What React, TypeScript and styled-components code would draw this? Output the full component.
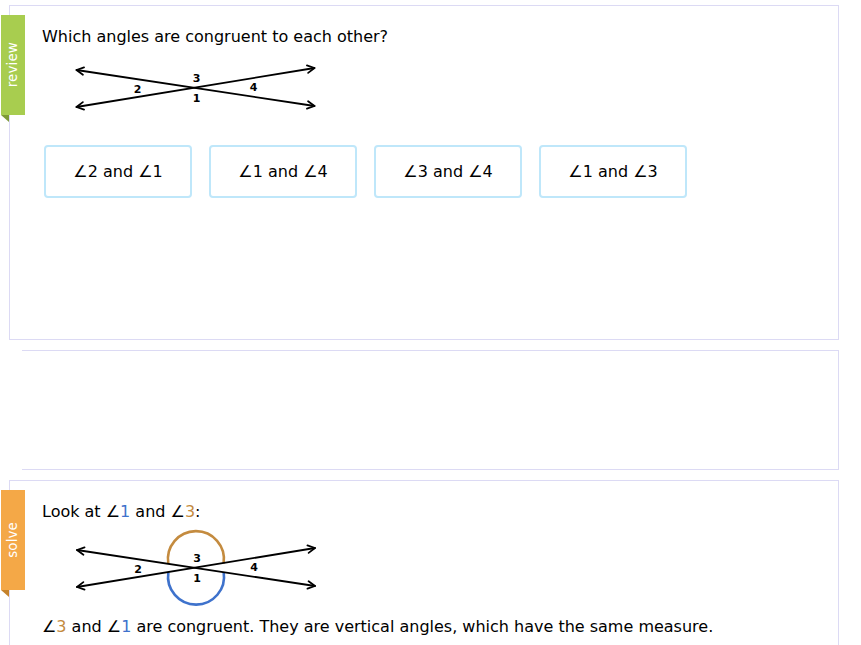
import React from "react";
import styled, { createGlobalStyle } from "styled-components";

const Global = createGlobalStyle`
  html, body { margin: 0; padding: 0; background: #fff; }
  body { font-family: "DejaVu Sans", Verdana, sans-serif; color: #000; overflow: hidden; }
`;

const Page = styled.div`
  display: flex;
  flex-direction: column;
  padding-top: 5px;
  width: 861px;
`;

const Panel = styled.section<{ $gapTop?: number }>`
  position: relative;
  box-sizing: border-box;
  margin-left: 9px;
  width: 830px;
  margin-top: ${(p) => p.$gapTop ?? 0}px;
  border: 1px solid #dcdaf4;
  padding: 21px 0 0 32px;
`;

const QuestionPanel = styled(Panel)`
  height: 335px;
`;

const EmptyPanel = styled.section`
  box-sizing: border-box;
  margin: 10px 0 0 22px;
  width: 817px;
  height: 120px;
  border: 1px solid #dcdaf4;
  border-left: none;
`;

const SolvePanel = styled(Panel)`
  height: 200px;
`;

const Tab = styled.div<{ $bg: string; $fold: string }>`
  position: absolute;
  left: -9px;
  top: 9px;
  width: 24px;
  height: 100px;
  background: ${(p) => p.$bg};
  display: flex;
  align-items: center;
  justify-content: center;
  &::after {
    content: "";
    position: absolute;
    left: 0;
    top: 100px;
    width: 0;
    height: 0;
    border-top: 7px solid ${(p) => p.$fold};
    border-left: 8px solid transparent;
  }
`;

const TabLabel = styled.span`
  writing-mode: vertical-rl;
  transform: rotate(180deg);
  color: #fff;
  font-size: 13.5px;
  line-height: 1;
  letter-spacing: 0.1px;
`;

const Text = styled.p`
  margin: 0;
  font-size: 16px;
  line-height: 20px;
`;

const Num = styled.span<{ $c: string }>`
  color: ${(p) => p.$c};
`;

const Figure = styled.svg<{ $mt: number }>`
  display: block;
  margin: ${(p) => p.$mt}px 0 0 28px;
  overflow: visible;
`;

const Choices = styled.div`
  display: flex;
  gap: 17px;
  margin: 33px 0 0 2px;
`;

const Choice = styled.button`
  box-sizing: border-box;
  width: 148px;
  height: 53px;
  border: 2px solid #bfe7fa;
  border-radius: 4px;
  background: #fff;
  font-family: "DejaVu Sans", Verdana, sans-serif;
  font-size: 16px;
  color: #000;
  padding: 0;
  display: flex;
  align-items: center;
  justify-content: center;
  cursor: pointer;
`;

const ANG = "\u2220";

const arrow = (tx: number, ty: number, fx: number, fy: number) => {
  const dx = fx - tx;
  const dy = fy - ty;
  const len = Math.hypot(dx, dy);
  const ux = dx / len;
  const uy = dy / len;
  const L = 8;
  const a = (28 * Math.PI) / 180;
  const c = Math.cos(a);
  const s = Math.sin(a);
  const p1 = [tx + L * (ux * c - uy * s), ty + L * (ux * s + uy * c)];
  const p2 = [tx + L * (ux * c + uy * s), ty + L * (-ux * s + uy * c)];
  return `${p1[0]},${p1[1]} ${tx},${ty} ${p2[0]},${p2[1]}`;
};

const Crossing: React.FC<{ cx: number; cy: number; arcs?: boolean }> = ({ cx, cy, arcs }) => {
  const l1 = [cx - 119, cy - 18, cx + 119, cy + 18];
  const l2 = [cx - 119, cy + 19, cx + 119, cy - 20];
  const r = 28;
  const pt = (x: number, y: number) => {
    const dx = x - cx;
    const dy = y - cy;
    const d = Math.hypot(dx, dy);
    return [cx + (r * dx) / d, cy + (r * dy) / d];
  };
  const ul = pt(l1[0], l1[1]);
  const ur = pt(l2[2], l2[3]);
  const dl = pt(l2[0], l2[1]);
  const dr = pt(l1[2], l1[3]);
  const label = { fontSize: 11, fontWeight: 700, fontFamily: "DejaVu Sans, Verdana, sans-serif" } as const;
  return (
    <g>
      {arcs && (
        <>
          <path d={`M${ul[0]},${ul[1]} A${r},${r} 0 1 1 ${ur[0]},${ur[1]}`} fill="none" stroke="#c48b3f" strokeWidth={2.6} />
          <path d={`M${dl[0]},${dl[1]} A${r},${r} 0 1 0 ${dr[0]},${dr[1]}`} fill="none" stroke="#3e72cc" strokeWidth={2.6} />
        </>
      )}
      <g stroke="#000" strokeWidth={1.8} fill="none" strokeLinecap="round" strokeLinejoin="round">
        <line x1={l1[0]} y1={l1[1]} x2={l1[2]} y2={l1[3]} />
        <line x1={l2[0]} y1={l2[1]} x2={l2[2]} y2={l2[3]} />
        <polyline points={arrow(l1[0], l1[1], l1[2], l1[3])} />
        <polyline points={arrow(l1[2], l1[3], l1[0], l1[1])} />
        <polyline points={arrow(l2[0], l2[1], l2[2], l2[3])} />
        <polyline points={arrow(l2[2], l2[3], l2[0], l2[1])} />
      </g>
      <g textAnchor="middle" dominantBaseline="central" style={label}>
        <text x={cx + 1} y={cy - 9.5}>3</text>
        <text x={cx - 58} y={cy + 1}>2</text>
        <text x={cx + 58} y={cy - 1}>4</text>
        <text x={cx + 1} y={cy + 10}>1</text>
      </g>
    </g>
  );
};

const choices: [string, string][] = [
  ["2", "1"],
  ["1", "4"],
  ["3", "4"],
  ["1", "3"],
];

const BLUE = "#3e72cc";
const GOLD = "#c48b3f";

export default function App() {
  return (
    <>
      <Global />
      <Page>
        <QuestionPanel>
          <Tab $bg="#a8cd4f" $fold="#7d9a36">
            <TabLabel>review</TabLabel>
          </Tab>
          <Text>Which angles are congruent to each other?</Text>
          <Figure $mt={15} width={250} height={50} viewBox="0 0 250 50">
            <Crossing cx={125.5} cy={26} />
          </Figure>
          <Choices>
            {choices.map(([a, b]) => (
              <Choice key={a + b}>
                {ANG}
                {a} and {ANG}
                {b}
              </Choice>
            ))}
          </Choices>
        </QuestionPanel>
        <EmptyPanel />
        <SolvePanel $gapTop={10}>
          <Tab $bg="#f4a847" $fold="#c5822c">
            <TabLabel>solve</TabLabel>
          </Tab>
          <Text>
            Look at {ANG}
            <Num $c={BLUE}>1</Num> and {ANG}
            <Num $c={GOLD}>3</Num>:
          </Text>
          <Figure $mt={15} width={250} height={64} viewBox="0 0 250 64">
            <Crossing cx={126} cy={31} arcs />
          </Figure>
          <Text style={{ marginTop: 16 }}>
            {ANG}
            <Num $c={GOLD}>3</Num> and {ANG}
            <Num $c={BLUE}>1</Num> are congruent. They are vertical angles, which have the same measure.
          </Text>
        </SolvePanel>
      </Page>
    </>
  );
}
